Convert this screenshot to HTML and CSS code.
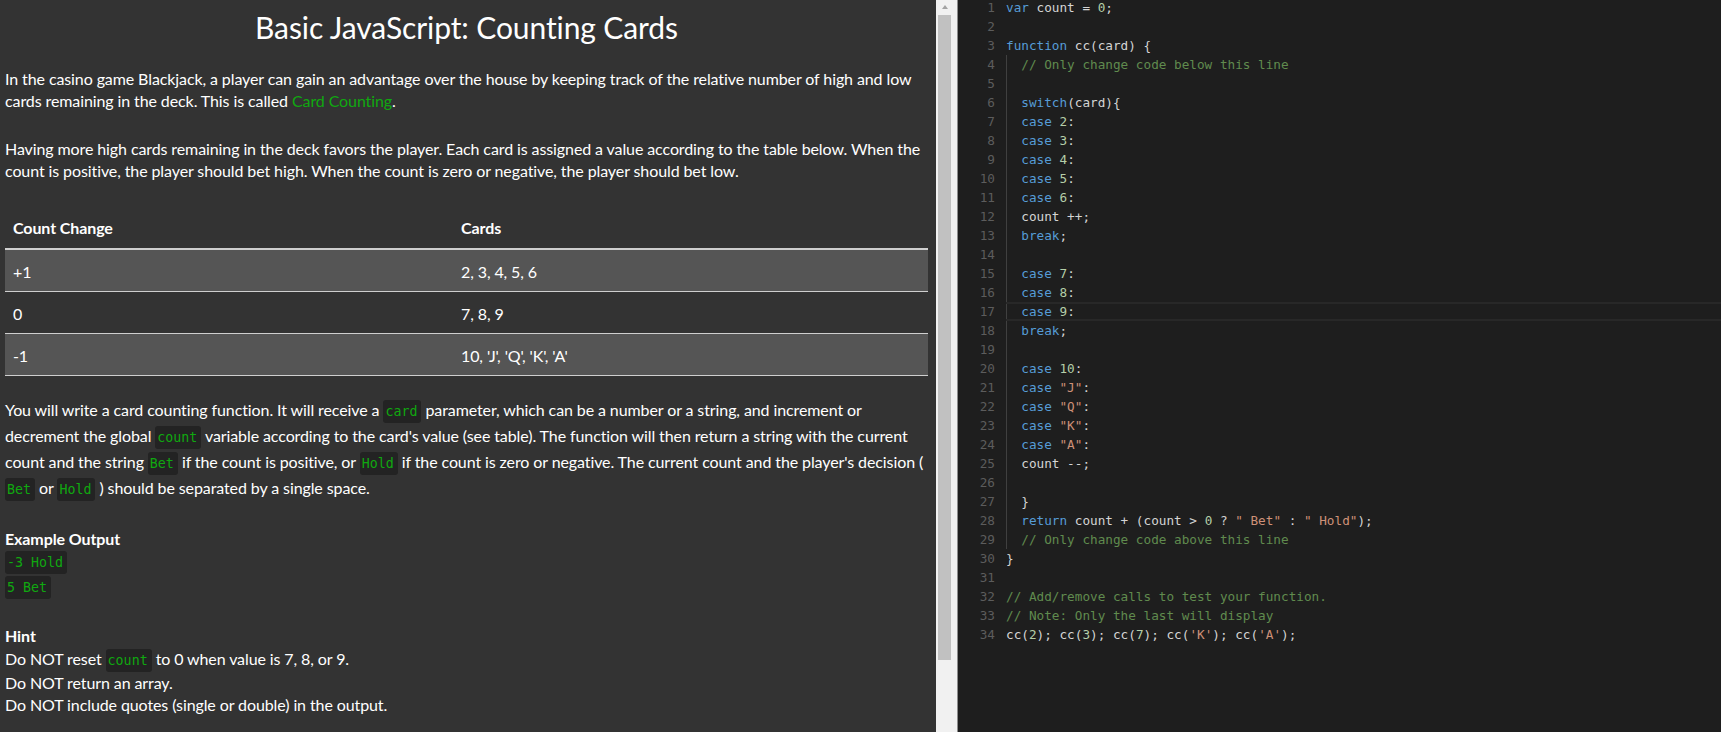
FILE: index.html
```html
<!DOCTYPE html>
<html lang="en">
<head>
<meta charset="utf-8">
<title>Basic JavaScript: Counting Cards</title>
<link rel="stylesheet" href="styles.css">
</head>
<body>
<div class="app">
  <section class="instructions">
    <h1 class="title">Basic JavaScript: Counting Cards</h1>
    <p class="para">In the casino game Blackjack, a player can gain an advantage over the house by keeping track of the relative number of high and low cards remaining in the deck. This is called <a class="link">Card Counting</a>.</p>
    <p class="para">Having more high cards remaining in the deck favors the player. Each card is assigned a value according to the table below. When the count is positive, the player should bet high. When the count is zero or negative, the player should bet low.</p>
    <table class="cards-table">
      <colgroup><col class="col-change"><col></colgroup>
      <thead>
        <tr><th>Count Change</th><th>Cards</th></tr>
      </thead>
      <tbody>
        <tr><td>+1</td><td>2, 3, 4, 5, 6</td></tr>
        <tr><td>0</td><td>7, 8, 9</td></tr>
        <tr><td>-1</td><td>10, 'J', 'Q', 'K', 'A'</td></tr>
      </tbody>
    </table>
    <p class="para para-code">You will write a card counting function. It will receive a <code class="chip">card</code> parameter, which can be a number or a string, and increment or decrement the global <code class="chip">count</code> variable according to the card's value (see table). The function will then return a string with the current count and the string <code class="chip">Bet</code> if the count is positive, or <code class="chip">Hold</code> if the count is zero or negative. The current count and the player's decision ( <code class="chip">Bet</code> or <code class="chip">Hold</code> ) should be separated by a single space.</p>
    <div class="example">
      <div class="label">Example Output</div>
      <div class="code-line"><code class="chip">-3 Hold</code></div>
      <div class="code-line"><code class="chip">5 Bet</code></div>
    </div>
    <div class="hint">
      <div class="label">Hint</div>
      <div class="hint-line hint-first">Do NOT reset <code class="chip">count</code> to 0 when value is 7, 8, or 9.</div>
      <div class="hint-line">Do NOT return an array.</div>
      <div class="hint-line">Do NOT include quotes (single or double) in the output.</div>
    </div>
  </section>
  <div class="scrollbar">
    <div class="arrow"></div>
    <div class="thumb"></div>
  </div>
  <div class="splitter"></div>
  <section class="editor">
    <div class="gutter">
      <div>1</div><div>2</div><div>3</div><div>4</div><div>5</div><div>6</div><div>7</div><div>8</div><div>9</div><div>10</div>
      <div>11</div><div>12</div><div>13</div><div>14</div><div>15</div><div>16</div><div>17</div><div>18</div><div>19</div><div>20</div>
      <div>21</div><div>22</div><div>23</div><div>24</div><div>25</div><div>26</div><div>27</div><div>28</div><div>29</div><div>30</div>
      <div>31</div><div>32</div><div>33</div><div>34</div>
    </div>
    <div class="code">
<div class="line"><span class="kw">var</span> count = <span class="num">0</span>;</div>
<div class="line"></div>
<div class="line"><span class="kw">function</span> cc(card) {</div>
<div class="guide">
<div class="line">  <span class="cm">// Only change code below this line</span></div>
<div class="line"></div>
<div class="line">  <span class="kw">switch</span>(card){</div>
<div class="line">  <span class="kw">case</span> <span class="num">2</span>:</div>
<div class="line">  <span class="kw">case</span> <span class="num">3</span>:</div>
<div class="line">  <span class="kw">case</span> <span class="num">4</span>:</div>
<div class="line">  <span class="kw">case</span> <span class="num">5</span>:</div>
<div class="line">  <span class="kw">case</span> <span class="num">6</span>:</div>
<div class="line">  count ++;</div>
<div class="line">  <span class="kw">break</span>;</div>
<div class="line"></div>
<div class="line">  <span class="kw">case</span> <span class="num">7</span>:</div>
<div class="line">  <span class="kw">case</span> <span class="num">8</span>:</div>
<div class="line current">  <span class="kw">case</span> <span class="num">9</span>:</div>
<div class="line">  <span class="kw">break</span>;</div>
<div class="line"></div>
<div class="line">  <span class="kw">case</span> <span class="num">10</span>:</div>
<div class="line">  <span class="kw">case</span> <span class="str">"J"</span>:</div>
<div class="line">  <span class="kw">case</span> <span class="str">"Q"</span>:</div>
<div class="line">  <span class="kw">case</span> <span class="str">"K"</span>:</div>
<div class="line">  <span class="kw">case</span> <span class="str">"A"</span>:</div>
<div class="line">  count --;</div>
<div class="line"></div>
<div class="line">  }</div>
<div class="line">  <span class="kw">return</span> count + (count &gt; <span class="num">0</span> ? <span class="str">" Bet"</span> : <span class="str">" Hold"</span>);</div>
<div class="line">  <span class="cm">// Only change code above this line</span></div>
</div>
<div class="line">}</div>
<div class="line"></div>
<div class="line"><span class="cm">// Add/remove calls to test your function.</span></div>
<div class="line"><span class="cm">// Note: Only the last will display</span></div>
<div class="line">cc(<span class="num">2</span>); cc(<span class="num">3</span>); cc(<span class="num">7</span>); cc(<span class="str">'K'</span>); cc(<span class="str">'A'</span>);</div>
    </div>
  </section>
</div>
</body>
</html>
```

FILE: styles.css
```css
html, body {
  margin: 0;
  padding: 0;
  background: #1e1e1e;
  overflow: hidden;
}

.app {
  display: flex;
  height: 732px;
  overflow: hidden;
}

/* ---------- Instructions panel ---------- */
.instructions {
  flex: none;
  width: 936px;
  box-sizing: border-box;
  padding: 0 8px 0 5px;
  background: #333333;
  color: #ffffff;
  font-family: Lato, "Open Sans", sans-serif;
  font-size: 16px;
  line-height: 22px;
  letter-spacing: -0.1px;
  overflow: hidden;
}

.title {
  margin: 9px 0 23px;
  font-size: 30px;
  font-weight: 400;
  line-height: 36px;
  text-align: center;
}

.para {
  margin: 0 0 26px;
}

.link {
  color: #10a810;
  text-decoration: none;
}

.chip {
  display: inline-block;
  padding: 0 4px 0 2px;
  border-radius: 3px;
  background: #232323;
  color: #10a810;
  font-family: "DejaVu Sans Mono", "Liberation Mono", monospace;
  font-size: 13.3px;
  letter-spacing: 0;
  line-height: 23px;
}

/* table */
.cards-table {
  width: 100%;
  border-collapse: separate;
  border-spacing: 0;
  table-layout: fixed;
  margin: 0 0 21px;
}

.col-change {
  width: 448px;
}

.cards-table th {
  padding: 9px 8px;
  line-height: 22px;
  text-align: left;
  font-weight: 700;
  border-bottom: 2px solid #cfcfcf;
}

.cards-table td {
  padding: 11px 8px 8px;
  line-height: 22px;
  border-bottom: 1px solid #cfcfcf;
}

.cards-table tbody tr:nth-child(odd) td {
  background: #555555;
}

.para-code {
  line-height: 26px;
}

.label {
  font-weight: 700;
  line-height: 23px;
}

.example {
  margin-bottom: 25px;
}

.code-line {
  display: flex;
  align-items: center;
  height: 25px;
}

.hint .label {
  line-height: 22px;
}

.hint-line {
  line-height: 22px;
}

.hint-first {
  line-height: 24px;
}

/* ---------- Scrollbar + splitter ---------- */
.scrollbar {
  flex: none;
  width: 17px;
  background: #f1f1f1;
  display: flex;
  flex-direction: column;
  align-items: center;
}

.arrow {
  width: 0;
  height: 0;
  margin-top: 5px;
  border-left: 3.5px solid transparent;
  border-right: 3.5px solid transparent;
  border-bottom: 4px solid #a3a3a3;
}

.thumb {
  width: 13px;
  height: 645px;
  margin-top: 6px;
  background: #c1c1c1;
}

.splitter {
  flex: none;
  width: 4px;
  background: #f1f1f1;
  border-right: 1px solid #8d8d8d;
}

/* ---------- Editor ---------- */
.editor {
  flex: 1;
  display: flex;
  background: #1e1e1e;
  font-family: "DejaVu Sans Mono", "Liberation Mono", monospace;
  font-size: 12.7px;
  line-height: 19px;
  color: #d4d4d4;
}

.gutter {
  flex: none;
  width: 37px;
  padding-right: 11px;
  margin-top: -2px;
  text-align: right;
  color: #5c5c5c;
}

.gutter div {
  height: 19px;
}

.code {
  flex: 1;
  margin-top: -2px;
}

.line {
  height: 19px;
  white-space: pre;
}

.guide {
  background: linear-gradient(#404040, #404040) no-repeat 0 0 / 1px 100%;
}

.current {
  box-shadow: inset 0 2px #282828, inset 0 -2px #282828;
}

.kw { color: #569cd6; }
.num { color: #b5cea8; }
.str { color: #ce9178; }
.cm { color: #608b4e; }
```
